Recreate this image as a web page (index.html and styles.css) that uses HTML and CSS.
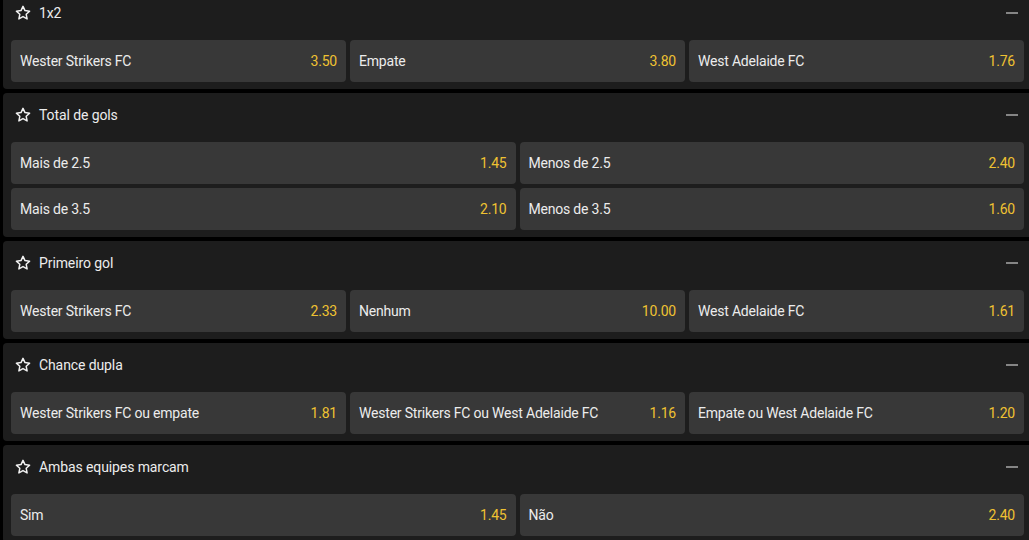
FILE: index.html
```html
<!DOCTYPE html>
<html lang="pt">
<head>
<meta charset="utf-8">
<link rel="stylesheet" href="styles.css">
</head>
<body>
<div class="markets">
  <section class="market">
    <div class="market-head">
      <svg class="star" viewBox="0 0 16 16"><path d="M8 1.4l2 4.2 4.6.6-3.4 3.1.9 4.6L8 11.6l-4.1 2.3.9-4.6-3.4-3.1 4.6-.6z"/></svg>
      <span class="title">1x2</span>
      <span class="collapse"></span>
    </div>
    <div class="grid cols3">
      <div class="odd"><span class="name">Wester Strikers FC</span><span class="price">3.50</span></div>
      <div class="odd"><span class="name">Empate</span><span class="price">3.80</span></div>
      <div class="odd"><span class="name">West Adelaide FC</span><span class="price">1.76</span></div>
    </div>
  </section>
  <section class="market">
    <div class="market-head">
      <svg class="star" viewBox="0 0 16 16"><path d="M8 1.4l2 4.2 4.6.6-3.4 3.1.9 4.6L8 11.6l-4.1 2.3.9-4.6-3.4-3.1 4.6-.6z"/></svg>
      <span class="title">Total de gols</span>
      <span class="collapse"></span>
    </div>
    <div class="grid cols2">
      <div class="odd"><span class="name">Mais de 2.5</span><span class="price">1.45</span></div>
      <div class="odd"><span class="name">Menos de 2.5</span><span class="price">2.40</span></div>
      <div class="odd"><span class="name">Mais de 3.5</span><span class="price">2.10</span></div>
      <div class="odd"><span class="name">Menos de 3.5</span><span class="price">1.60</span></div>
    </div>
  </section>
  <section class="market">
    <div class="market-head">
      <svg class="star" viewBox="0 0 16 16"><path d="M8 1.4l2 4.2 4.6.6-3.4 3.1.9 4.6L8 11.6l-4.1 2.3.9-4.6-3.4-3.1 4.6-.6z"/></svg>
      <span class="title">Primeiro gol</span>
      <span class="collapse"></span>
    </div>
    <div class="grid cols3">
      <div class="odd"><span class="name">Wester Strikers FC</span><span class="price">2.33</span></div>
      <div class="odd"><span class="name">Nenhum</span><span class="price">10.00</span></div>
      <div class="odd"><span class="name">West Adelaide FC</span><span class="price">1.61</span></div>
    </div>
  </section>
  <section class="market">
    <div class="market-head">
      <svg class="star" viewBox="0 0 16 16"><path d="M8 1.4l2 4.2 4.6.6-3.4 3.1.9 4.6L8 11.6l-4.1 2.3.9-4.6-3.4-3.1 4.6-.6z"/></svg>
      <span class="title">Chance dupla</span>
      <span class="collapse"></span>
    </div>
    <div class="grid cols3">
      <div class="odd"><span class="name">Wester Strikers FC ou empate</span><span class="price">1.81</span></div>
      <div class="odd"><span class="name">Wester Strikers FC ou West Adelaide FC</span><span class="price">1.16</span></div>
      <div class="odd"><span class="name">Empate ou West Adelaide FC</span><span class="price">1.20</span></div>
    </div>
  </section>
  <section class="market">
    <div class="market-head">
      <svg class="star" viewBox="0 0 16 16"><path d="M8 1.4l2 4.2 4.6.6-3.4 3.1.9 4.6L8 11.6l-4.1 2.3.9-4.6-3.4-3.1 4.6-.6z"/></svg>
      <span class="title">Ambas equipes marcam</span>
      <span class="collapse"></span>
    </div>
    <div class="grid cols2">
      <div class="odd"><span class="name">Sim</span><span class="price">1.45</span></div>
      <div class="odd"><span class="name">Não</span><span class="price">2.40</span></div>
    </div>
  </section>
</div>
</body>
</html>
```
FILE: styles.css
```css
html, body {
  margin: 0;
  padding: 0;
  background: #000;
  overflow: hidden;
}
body {
  font-family: Roboto, "Noto Sans", sans-serif;
  font-size: 14px;
  color: #ececec;
}
.markets {
  display: flex;
  flex-direction: column;
  gap: 4px;
  margin: -9px 0 0 3px;
  width: 1029px;
}
.market {
  background: #1d1d1d;
  border-radius: 4px;
  padding: 0 8px 7px 8px;
}
.market-head {
  height: 49px;
  display: flex;
  align-items: center;
  padding: 0 0 5px 4px;
  box-sizing: border-box;
}
.star {
  width: 16px;
  height: 16px;
  fill: none;
  stroke: #f2f2f2;
  stroke-width: 1.5;
  stroke-linejoin: round;
  margin-right: 8px;
}
.title {
  flex: 1;
  letter-spacing: -0.1px;
}
.collapse {
  width: 12px;
  height: 2px;
  background: #858585;
  margin-right: 6px;
}
.grid {
  display: grid;
  gap: 4px;
}
.cols3 { grid-template-columns: repeat(3, 335px); }
.cols2 { grid-template-columns: repeat(2, 504.5px); }
.odd {
  height: 42px;
  background: #383838;
  border-radius: 4px;
  display: flex;
  align-items: center;
  justify-content: space-between;
  padding: 0 9px;
  letter-spacing: -0.2px;
}
.price {
  color: #efc232;
}
```
